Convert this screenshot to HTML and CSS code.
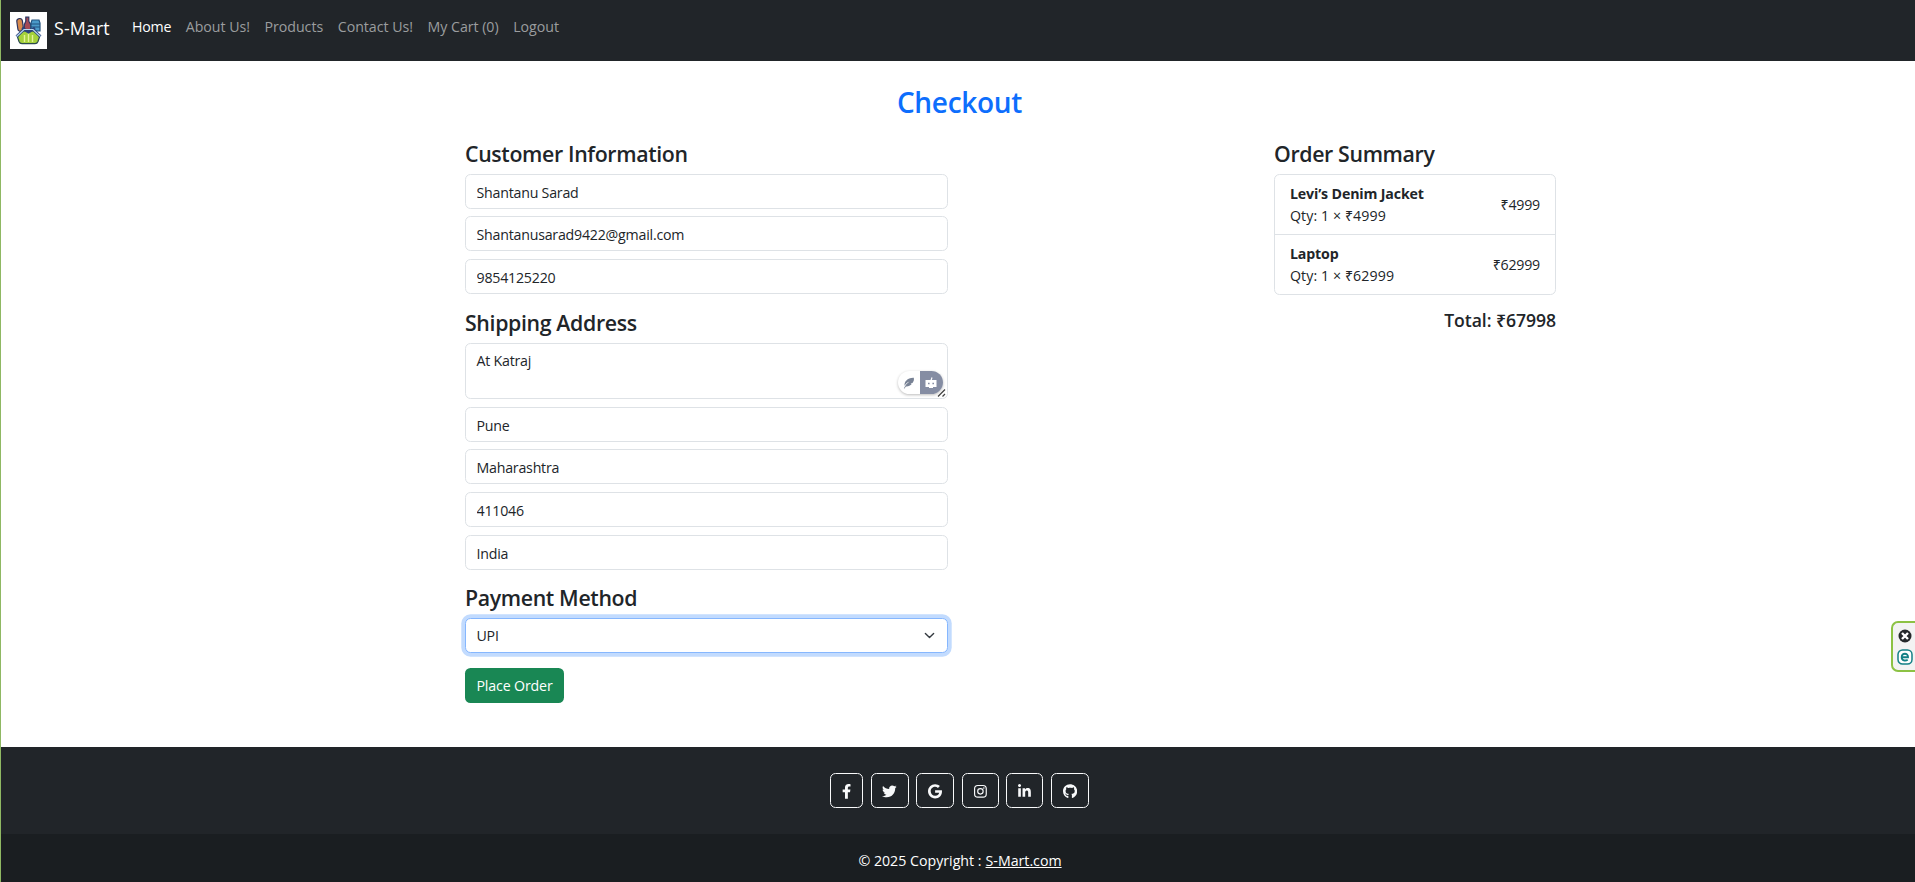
FILE: index.html
```html
<!DOCTYPE html>
<html lang="en">
<head>
<meta charset="utf-8">
<title>S-Mart Checkout</title>
<link rel="stylesheet" href="styles.css">
</head>
<body>
<nav class="navbar">
  <a class="brand">
    <svg class="brand-logo" viewBox="0 0 37 37">
      <rect width="37" height="37" fill="#fff"/>
      <rect x="7.2" y="6.5" width="5.6" height="13" rx="2.8" fill="#d98a4c" stroke="#2d3560" stroke-width="1.2" transform="rotate(-8 10 12)"/>
      <path d="M15.800 5.200h3v4l2 3.500v7h-6.500v-7l1.500-3.500z" fill="#a44a55" stroke="#2d3560" stroke-width="1.200"/>
      <path d="M22 8h7l1 3v8h-9v-8z" fill="#4b9ac9" stroke="#23527e" stroke-width="1.200"/>
      <path d="M21 12h9M21 15h9" stroke="#23527e"/>
      <path d="M11 19h15l3.500 6-1.500 4.500q-.8 2.200-3 2.200H12q-2.200 0-3-2.200L7.500 25z" fill="#a5d13b" stroke="#2d4a50" stroke-width="1.200"/>
      <path d="M14.500 23v7M18.500 20v10M22.500 23v7" stroke="#e4f29a" stroke-width="1.400"/>
      <path d="M6.500 24.500 14 17.500M30.500 24.500 23 17.500M12 16l6.500 4 6.500-4" fill="none" stroke="#2b447c" stroke-width="2.800"/>
      <path d="M6.500 24.500 14 17.500h9l7.500 7" fill="none" stroke="#b9d8f2" stroke-width="1.200"/>
    </svg>
    <span>S-Mart</span>
  </a>
  <ul class="nav-links">
    <li class="active">Home</li>
    <li>About Us!</li>
    <li>Products</li>
    <li>Contact Us!</li>
    <li>My Cart (0)</li>
    <li>Logout</li>
  </ul>
</nav>

<main class="checkout">
  <h2 class="page-title"><span>Checkout</span></h2>
  <div class="columns">
    <form class="details">
      <h4>Customer Information</h4>
      <div class="fields">
        <input class="control" value="Shantanu Sarad">
        <input class="control" value="Shantanusarad9422@gmail.com">
        <input class="control" value="9854125220">
      </div>
      <h4>Shipping Address</h4>
      <div class="fields address">
        <div class="area-wrap">
          <textarea class="control area" spellcheck="false">At Katraj</textarea>
          <div class="assist">
            <span class="assist-pen"><svg viewBox="0 0 12 12"><path d="M.8 11.400C2.200 8.500 3.800 6.500 6.500 4.500 4 5.500 2.600 7 1.600 8.800.9 5 4.500.5 10.800.8c.5 2.200-.2 3.800-1.300 5.200l-2 .4 1.200.6C7.300 8.800 5.200 9.600 2.900 9.400L1.500 11.500z" fill="#788295"/></svg></span>
            <span class="assist-bot"><svg viewBox="0 0 14 12"><path d="M7 3.500 8 .5" stroke="#fff" stroke-width="1.200"/><path fill="#fff" fill-rule="evenodd" d="M1.500 3h11v7H9v1H5v-1H1.500zM4 5.700v1.600h1.600V5.700zM8.400 5.700v1.600H10V5.700z"/></svg></span>
          </div>
          <svg class="grip" viewBox="0 0 9 9"><path d="M1 8.500 8 1.500M5.500 8.500 8 6" stroke="#444" stroke-width="1.300"/></svg>
        </div>
        <input class="control" value="Pune">
        <input class="control" value="Maharashtra">
        <input class="control" value="411046">
        <input class="control" value="India">
      </div>
      <h4>Payment Method</h4>
      <div class="control select"><span>UPI</span>
        <svg viewBox="0 0 16 16"><path d="m2 5 6 6 6-6" fill="none" stroke="#343a40" stroke-width="2" stroke-linecap="round" stroke-linejoin="round"/></svg>
      </div>
      <button class="place" type="button">Place Order</button>
    </form>
    <section class="summary">
      <h4>Order Summary</h4>
      <ul class="items">
        <li><div><strong>Levi’s Denim Jacket</strong><p>Qty: 1 × ₹4999</p></div><span class="price">₹4999</span></li>
        <li><div><strong>Laptop</strong><p>Qty: 1 × ₹62999</p></div><span class="price">₹62999</span></li>
      </ul>
      <h5 class="total">Total: ₹67998</h5>
    </section>
  </div>
</main>

<footer>
  <div class="social">
    <a class="w33"><svg viewBox="0 0 320 512"><path d="M279.140 288l14.220-92.660h-88.910v-60.130c0-25.350 12.420-50.060 52.240-50.060h40.420V6.260S260.430 0 225.360 0c-73.220 0-121.080 44.380-121.080 124.720v70.620H22.890V288h81.390v224h100.170V288z"/></svg></a>
    <a class="w38"><svg viewBox="0 0 512 512"><path d="M459.370 151.716c.325 4.548.325 9.097.325 13.645 0 138.720-105.583 298.558-298.558 298.558-59.452 0-114.680-17.219-161.137-47.106 8.447.974 16.568 1.299 25.340 1.299 49.055 0 94.213-16.568 130.274-44.832-46.132-.975-84.792-31.188-98.112-72.772 6.498.974 12.995 1.624 19.818 1.624 9.421 0 18.843-1.300 27.614-3.573-48.081-9.747-84.143-51.980-84.143-102.985v-1.299c13.969 7.797 30.214 12.670 47.431 13.319-28.264-18.843-46.781-51.005-46.781-87.391 0-19.492 5.197-37.360 14.294-52.954 51.655 63.675 129.300 105.258 216.365 109.807-1.624-7.797-2.599-15.918-2.599-24.040 0-57.828 46.782-104.934 104.934-104.934 30.213 0 57.502 12.670 76.670 33.137 23.715-4.548 46.456-13.320 66.599-25.340-7.798 24.366-24.366 44.833-46.132 57.827 21.117-2.273 41.584-8.122 60.426-16.243-14.292 20.791-32.161 39.308-52.628 54.253z"/></svg></a>
    <a class="w38"><svg viewBox="0 0 488 512"><path d="M488 261.800C488 403.300 391.100 504 248 504 110.800 504 0 393.200 0 256S110.800 8 248 8c66.800 0 123 24.500 166.300 64.900l-67.500 64.900C258.500 52.600 94.300 116.600 94.300 256c0 86.500 69.100 156.600 153.700 156.600 98.200 0 135-70.400 140.800-106.900H248v-85.300h236.100c2.300 12.700 3.900 24.900 3.900 41.400z"/></svg></a>
    <a class="w37"><svg viewBox="0 0 448 512"><path fill-rule="evenodd" d="M132 32h184q132 0 132 132v184q0 132-132 132H132Q0 480 0 348V164Q0 32 132 32zM136 72q-95 0-95 95v178q0 95 95 95h176q95 0 95-95V167q0-95-95-95zM224 141a115 115 0 1 1 0 230 115 115 0 0 1 0-230zm0 40a75 75 0 1 0 0 150 75 75 0 0 0 0-150z"/><circle cx="344" cy="136" r="27"/></svg></a>
    <a class="w37"><svg viewBox="0 0 448 512"><path d="M100.280 448H7.400V148.900h92.880zM53.790 108.100C24.090 108.100 0 83.500 0 53.800a53.790 53.790 0 0 1 107.580 0c0 29.700-24.100 54.300-53.790 54.300zM447.900 448h-92.680V302.400c0-34.700-.7-79.200-48.290-79.200-48.290 0-55.690 37.700-55.690 76.700V448h-92.780V148.900h89.080v40.800h1.300c12.400-23.500 42.690-48.300 87.880-48.300 94 0 111.280 61.900 111.280 142.300V448z"/></svg></a>
    <a class="w38"><svg viewBox="0 0 496 512"><path d="M244.800 8C106.100 8 0 113.300 0 252c0 110.900 69.800 205.800 169.500 239.200 12.800 2.300 17.300-5.600 17.300-12.100 0-6.200-.3-40.400-.3-61.400 0 0-70 15-84.700-29.800 0 0-11.400-29.100-27.800-36.600 0 0-22.900-15.700 1.600-15.400 0 0 24.900 2 38.600 25.800 21.900 38.600 58.600 27.500 72.900 20.900 2.300-16 8.800-27.100 16-33.700-55.900-6.200-112.300-14.300-112.300-110.500 0-27.500 7.600-41.300 23.600-58.900-2.600-6.500-11.100-33.300 2.600-67.900 20.900-6.500 69 27 69 27 20-5.600 41.500-8.500 62.800-8.500s42.800 2.900 62.800 8.500c0 0 48.100-33.600 69-27 13.700 34.700 5.200 61.400 2.600 67.900 16 17.700 25.800 31.500 25.800 58.900 0 96.500-58.900 104.200-114.800 110.500 9.200 7.900 17 22.900 17 46.400 0 33.700-.3 75.400-.3 83.600 0 6.500 4.600 14.400 17.300 12.100C428.200 457.800 496 362.900 496 252 496 113.300 383.500 8 244.800 8z"/></svg></a>
  </div>
  <div class="copyright"><span>© 2025 Copyright : </span><a>S-Mart.com</a></div>
</footer>

<aside class="side-tab">
  <svg viewBox="0 0 14 14"><circle cx="7" cy="7" r="6.500" fill="#25282b"/><path d="m4 4 6 6M10 4l-6 6" stroke="#fff" stroke-width="2.400"/></svg>
  <svg viewBox="0 0 16 16"><rect x="1" y="1" width="14" height="14" rx="4.500" fill="#fff" stroke="#138086" stroke-width="1.500"/><path d="M5 8.200h6C11.300 3.500 4.600 3.500 4.700 8.200c0 3.500 3.800 4 6 2.500" fill="none" stroke="#138086" stroke-width="1.900"/></svg>
</aside>
</body>
</html>
```
FILE: styles.css
```css
* { box-sizing: border-box; }
body {
  margin: 0;
  height: 882px;
  overflow: hidden;
  display: flex;
  flex-direction: column;
  background: #fff;
  color: #212529;
  border-left: 1px solid #8fb863;
  font-family: "Open Sans", "Noto Sans", sans-serif;
  font-size: 14.2px;
  line-height: 22px;
  letter-spacing: -0.22px;
}
h2, h4, h5, p, ul { margin: 0; padding: 0; font-weight: 600; }
ul { list-style: none; font-weight: 400; }
p { font-weight: 400; }

.navbar { height: 61px; background: #212529; display: flex; padding-left: 9px; flex: none; }
.brand { display: flex; align-items: center; gap: 7px; width: 122px; color: #fff; font-size: 17.8px; letter-spacing: 0.15px; }
.brand span { padding-bottom: 5px; }
.brand-logo { width: 37px; height: 37px; }
.nav-links { display: flex; gap: 14.600px; padding-top: 16px; color: #9b9d9f; letter-spacing: -0.03px; }
.active { color: #fff; letter-spacing: -0.25px; }

.checkout { height: 686px; flex: none; }
.page-title { padding-top: 23px; height: 78px; text-align: center; font-size: 28px; line-height: 36px; color: #0d6efd; letter-spacing: -0.3px; padding-left: 3px; }
.columns { display: flex; justify-content: space-between; padding: 0 359px 0 464px; }
.details { width: 483px; }
h4 { font-size: 21.300px; line-height: 27px; height: 35px; padding-top: 1px; letter-spacing: -0.35px; }
.fields { display: flex; flex-direction: column; gap: 7.400px; margin-bottom: 14px; }
.address { gap: 7.600px; margin-bottom: 13.200px; }
.control {
  display: block;
  width: 100%;
  height: 35px;
  margin: 0;
  padding: 6px 10.500px 4px;
  border: 1px solid #dee2e6;
  border-radius: 5.500px;
  outline: 0;
  background: #fff;
  color: #212529;
  font: inherit;
  letter-spacing: inherit;
}
.area-wrap { position: relative; height: 56.500px; }
.area { height: 56.500px; resize: none; }
.grip { position: absolute; right: 2px; bottom: 2px; width: 9px; height: 9px; }
.assist { position: absolute; right: 5.500px; top: 28.500px; display: flex; width: 45px; height: 23px; border-radius: 12px; overflow: hidden; box-shadow: 0 1px 3px #0004; background: #fff; }
.assist span { flex: 1; display: flex; align-items: center; justify-content: center; }
.assist-bot { background: #858da3; }
.assist svg { width: 12px; height: 12px; }
.assist .assist-bot svg { width: 14px; }
.select { display: flex; align-items: center; justify-content: space-between; border-color: #86b7fe; box-shadow: 0 0 0 3.700px #c2dbfe; }
.select svg { width: 11px; height: 11px; margin: 0 2px 2px 0; }
.place { display: block; width: 99px; height: 35px; margin-top: 15px; padding: 2px 0 0; border: 0; border-radius: 5.500px; background: #198754; color: #fff; font: inherit; letter-spacing: -0.15px; }

.summary { width: 282px; }
.items { border: 1px solid #dee2e6; border-radius: 5.500px; }
.items li { display: flex; justify-content: space-between; align-items: center; height: 59px; padding: 1px 15px 0; }
.items li + li { height: 60px; border-top: 1px solid #dee2e6; }
.items strong { display: block; font-weight: 700; letter-spacing: -0.15px; }
.items p { letter-spacing: 0.08px; }
.total { padding-top: 13px; text-align: right; font-size: 17.600px; line-height: 24px; letter-spacing: -0.05px; }

footer { height: 135px; flex: none; background: #212529; }
.social { height: 87px; display: flex; justify-content: center; gap: 7.600px; padding: 26px 0 0 3px; }
.social a { height: 35px; border: 1px solid #f8f9fa; border-radius: 5.500px; display: flex; align-items: center; justify-content: center; }
.social svg { height: 14.700px; fill: #f8f9fa; margin-top: 2px; }
.w33 { width: 33px; }
.w37 { width: 37px; }
.w38 { width: 38px; }
.copyright { height: 48px; padding: 16px 0 0 4px; background: #1a1e21; color: #fff; display: flex; justify-content: center; gap: 4px; letter-spacing: 0; }
.copyright a { text-decoration: underline; }

.side-tab { position: absolute; right: 0; top: 621px; width: 24px; height: 51px; border: 2px solid #8cc244; border-right: 0; border-radius: 7px 0 0 7px; background: #f3f3f3; display: flex; flex-direction: column; align-items: center; justify-content: center; gap: 6px; padding-left: 2px; }
.side-tab svg { width: 14px; height: 14px; }
.side-tab svg + svg { width: 16px; height: 16px; }
```
